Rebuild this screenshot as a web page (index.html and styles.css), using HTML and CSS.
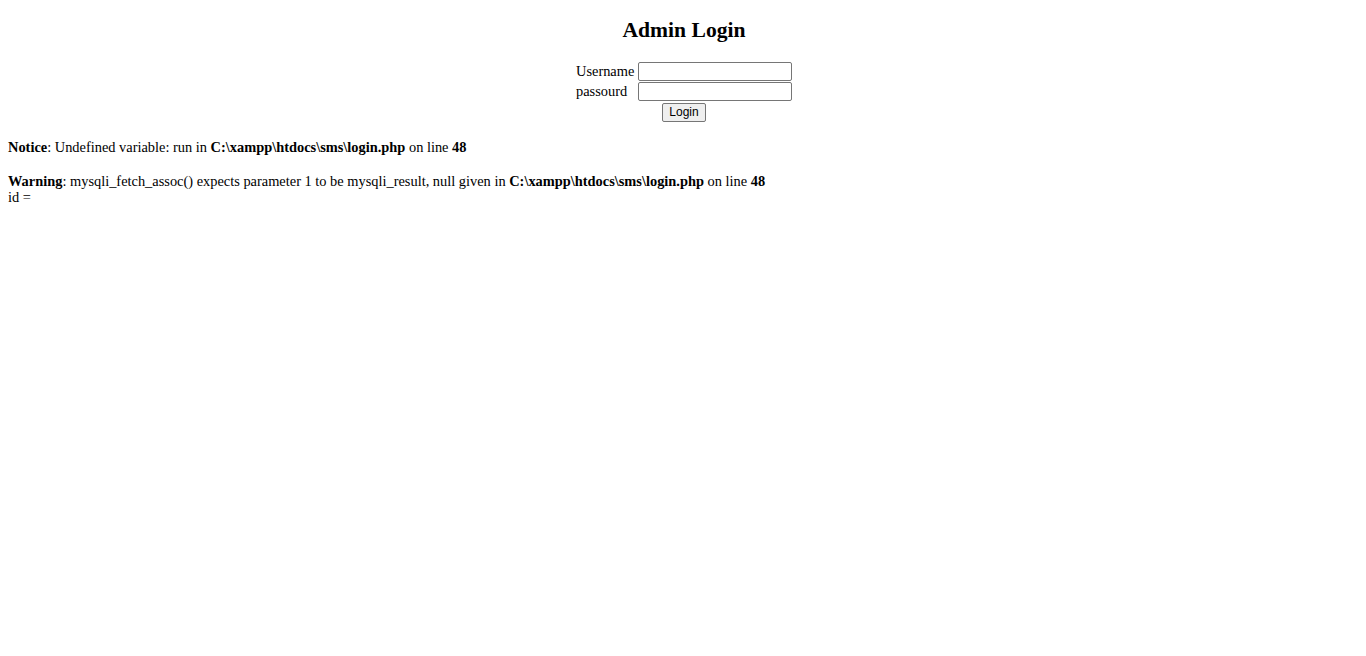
FILE: index.html
```html
<!DOCTYPE html>
<html>
<head>
<meta charset="utf-8">
<title>Admin Login</title>
<link rel="stylesheet" href="styles.css">
</head>
<body>
<h2 class="title">Admin Login</h2>
<form class="login-form">
  <label class="field-label" for="user">Username</label>
  <input class="field-input" id="user" type="text">
  <label class="field-label" for="pass">passourd</label>
  <input class="field-input" id="pass" type="password">
  <button class="login-btn" type="button">Login</button>
</form>
<div class="php-output">
  <p class="php-msg"><b>Notice</b>: Undefined variable: run in <b>C:\xampp\htdocs\sms\login.php</b> on line <b>48</b></p>
  <p class="php-msg"><b>Warning</b>: mysqli_fetch_assoc() expects parameter 1 to be mysqli_result, null given in <b>C:\xampp\htdocs\sms\login.php</b> on line <b>48</b></p>
  <p class="php-line">id = </p>
</div>
</body>
</html>
```

FILE: styles.css
```css
html, body {
  background: #fff;
}
body {
  margin: 0;
  padding: 0 8px;
  font-family: "Liberation Serif", "Times New Roman", serif;
  font-size: 14.4px;
  color: #000;
}
.title {
  margin: 18px 0 0;
  padding-left: 2px;
  font-size: 21.6px;
  font-weight: bold;
  text-align: center;
  line-height: 1.15;
}
.login-form {
  margin: 19px 0 0;
  padding-left: 2px;
  display: grid;
  grid-template-columns: 62px 154px;
  grid-auto-rows: 19px;
  row-gap: 1px;
  justify-content: center;
  align-items: start;
}
.field-label {
  align-self: center;
  line-height: 1.15;
  white-space: nowrap;
}
.field-input {
  box-sizing: border-box;
  width: 154px;
  height: 19px;
  margin: 0;
  padding: 0 2px;
  border: 1px solid #767676;
  border-radius: 2px;
  background: #fff;
  font-family: "Liberation Sans", Arial, sans-serif;
  font-size: 12px;
}
.login-btn {
  grid-column: 1 / span 2;
  justify-self: center;
  align-self: start;
  box-sizing: border-box;
  width: 44px;
  height: 19px;
  margin: 1px 0 0;
  padding: 0;
  border: 1px solid #767676;
  border-radius: 2px;
  background: #efefef;
  color: #000;
  font-family: "Liberation Sans", Arial, sans-serif;
  font-size: 12px;
  line-height: 15px;
}
.php-output {
  margin-top: 18px;
  line-height: 1.15;
}
.php-msg {
  margin: 0 0 17.5px;
}
.php-msg + .php-msg {
  margin-bottom: 0;
}
.php-line {
  margin: 0;
}
```
